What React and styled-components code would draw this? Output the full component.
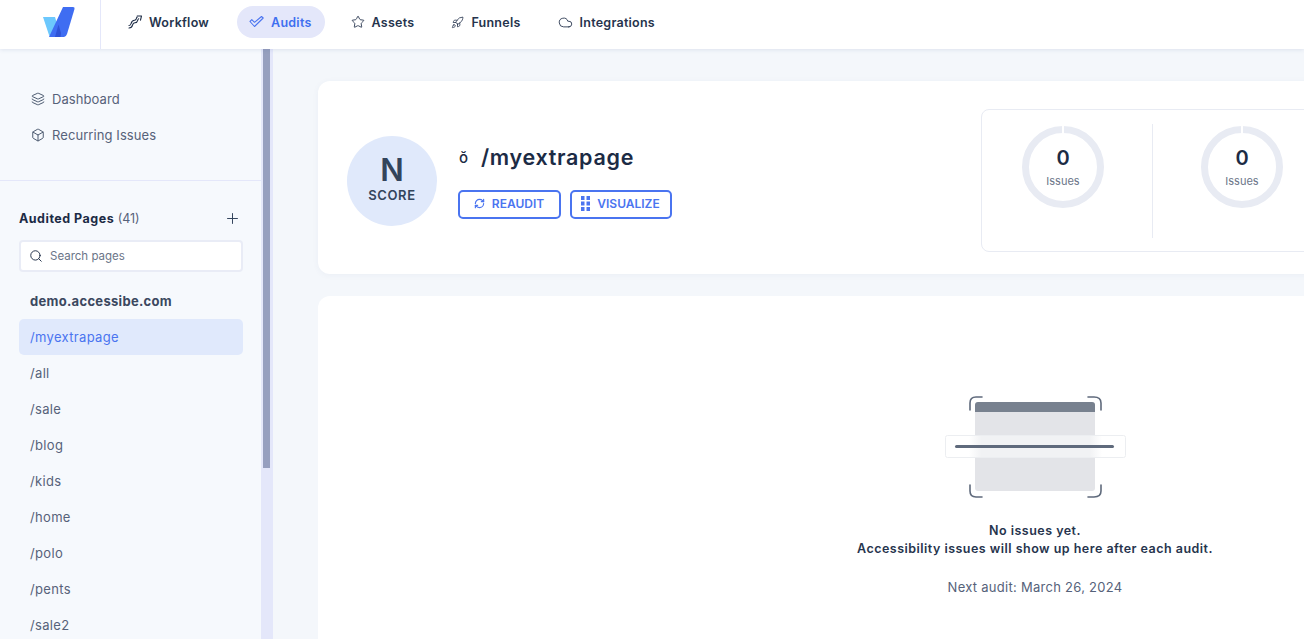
import React from 'react';
import styled, { createGlobalStyle } from 'styled-components';
import { Star, Rocket, Cloud, Layers, Box, Search, Plus, RefreshCw } from 'lucide-react';

const Global = createGlobalStyle`
    html, body { margin: 0; height: 100%; overflow: hidden; }
    body { font-family: Inter, "Noto Sans", sans-serif; color: #1c2b45; background: #f4f7fb; }
    #root { height: 100%; }
    * { box-sizing: border-box; }
`;

const Page = styled.div`
    height: 639px;
    width: 1304px;
    overflow: hidden;
    display: flex;
    flex-direction: column;
`;

const TopBar = styled.header`
    height: 49px;
    flex: none;
    display: flex;
    background: #fff;
    box-shadow: 0 1px 4px rgba(60, 80, 140, .12);
    position: relative;
    z-index: 2;
`;

const LogoCell = styled.div`
    width: 101px;
    flex: none;
    border-right: 1px solid #e4e7fa;
    padding: 7px 0 0 43px;
`;

const Nav = styled.nav`
    display: flex;
    align-items: flex-start;
    padding: 6px 0 0 13px;
`;

const NavItem = styled.a`
    height: 32px;
    display: flex;
    align-items: center;
    gap: 7px;
    padding: 0 ${p => (p.$active ? 13 : 14)}px 0 ${p => (p.$active ? 12 : 14)}px;
    margin-right: ${p => p.$gap}px;
    border-radius: 16px;
    font-size: 12.5px;
    font-weight: 600;
    letter-spacing: .25px;
    color: ${p => (p.$active ? '#3f6ff0' : '#26344d')};
    background: ${p => (p.$active ? '#e4e7fa' : 'transparent')};
`;

const Body = styled.div`
    flex: 1;
    display: flex;
    min-height: 0;
`;

const Sidebar = styled.aside`
    width: 261px;
    flex: none;
    background: #f6f9fd;
    overflow: hidden;
`;

const ScrollTrack = styled.div`
    width: 12px;
    flex: none;
    background: #e4e7fa;
    padding-left: 2px;
`;

const ScrollThumb = styled.div`
    width: 7px;
    height: 419px;
    background: #969fbf;
`;

const TopLinks = styled.div`
    height: 132px;
    padding: 32px 0 0 31px;
    border-bottom: 1px solid #e4e7fa;
`;

const TopLink = styled.div`
    height: 36px;
    display: flex;
    align-items: center;
    gap: 7px;
    font-size: 13px;
    letter-spacing: .08px;
    color: #56627a;
    svg { color: #33445c; }
`;

const PagesHead = styled.div`
    display: flex;
    align-items: center;
    justify-content: space-between;
    padding: 28px 20px 0 19px;
    height: 47px;
    font-size: 12.5px;
    font-weight: 700;
    letter-spacing: .5px;
    color: #1c2b45;
    span { font-weight: 400; letter-spacing: 0; color: #56627a; }
`;

const SearchBox = styled.div`
    margin: 12px 18px 0 19px;
    height: 32px;
    display: flex;
    align-items: center;
    gap: 7px;
    padding: 0 8px;
    background: #fff;
    border: 2px solid #e9ecf6;
    border-radius: 4px;
    font-size: 11.5px;
    color: #6b7588;
`;

const Domain = styled.div`
    height: 33px;
    margin-top: 14px;
    padding: 0 0 3px 30px;
    display: flex;
    align-items: center;
    font-size: 13px;
    font-weight: 700;
    letter-spacing: .3px;
    color: #3b4860;
`;

const PageRow = styled.div`
    height: 36px;
    margin: 0 18px 0 19px;
    padding-left: 11px;
    display: flex;
    align-items: center;
    border-radius: 5px;
    font-size: 13px;
    letter-spacing: .33px;
    color: ${p => (p.$active ? '#4a74f0' : '#56627a')};
    background: ${p => (p.$active ? '#e0e9fc' : 'transparent')};
`;

const Main = styled.main`
    flex: 1;
    padding: 32px 0 0 45px;
    overflow: hidden;
`;

const Card = styled.section`
    width: 1434px;
    background: #fff;
    border-radius: 12px;
`;

const ScoreCard = styled(Card)`
    height: 193px;
    display: flex;
    align-items: flex-start;
    padding: 28px 0 0 29px;
    margin-bottom: 22px;
    box-shadow: 0 1px 6px rgba(60, 80, 140, .05);
`;

const ScoreCircle = styled.div`
    width: 90px;
    height: 90px;
    margin-top: 27px;
    padding-bottom: 6px;
    flex: none;
    border-radius: 50%;
    background: #e0e9fb;
    display: flex;
    flex-direction: column;
    align-items: center;
    justify-content: center;
    color: #33445c;
`;

const ScoreLetter = styled.div`
    font-size: 31px;
    font-weight: 600;
    line-height: 34px;
`;

const ScoreLabel = styled.div`
    font-size: 13px;
    font-weight: 600;
    letter-spacing: .6px;
    line-height: 16px;
`;

const PageInfo = styled.div`
    width: 544px;
    flex: none;
    padding: 32px 0 0 21px;
`;

const Title = styled.h1`
    margin: 0;
    height: 32px;
    display: flex;
    align-items: center;
    gap: 11px;
    font-size: 21.5px;
    font-weight: 600;
    letter-spacing: .7px;
    color: #1c2b45;
    i { font-style: normal; font-size: 15px; font-weight: 500; width: 12px; padding-left: 1px; }
`;

const Actions = styled.div`
    display: flex;
    gap: 9px;
    margin-top: 17px;
`;

const OutlineButton = styled.button`
    height: 29px;
    width: ${p => p.$w}px;
    display: flex;
    align-items: center;
    justify-content: center;
    gap: 7px;
    padding: 0 1px 2px 0;
    background: #fff;
    border: 2px solid #4a74f0;
    border-radius: 5px;
    font: 600 12px Inter, sans-serif;
    color: #4a74f0;
`;

const StatsBox = styled.div`
    width: 500px;
    height: 143px;
    flex: none;
    display: flex;
    padding: 14px 0;
    border: 1px solid #e8ebf3;
    border-radius: 8px;
`;

const Stat = styled.div`
    width: ${p => p.$w}px;
    flex: none;
    height: 114px;
    padding: 2px 0 0 ${p => p.$pad}px;
    border-right: ${p => (p.$line ? '1px solid #e8ebf3' : 'none')};
`;

const Ring = styled.div`
    width: 82px;
    height: 82px;
    position: relative;
`;

const RingText = styled.div`
    position: absolute;
    inset: 0;
    display: flex;
    flex-direction: column;
    align-items: center;
    justify-content: center;
    b { font-size: 20px; font-weight: 600; line-height: 24px; color: #1c2b45; }
    span { margin-top: 3px; font-size: 11px; line-height: 16px; color: #6b7588; }
`;

const EmptyCard = styled(Card)`
    height: 400px;
    padding-top: 99px;
    display: flex;
    flex-direction: column;
    align-items: center;
`;

const EmptyText = styled.p`
    margin: 23px 0 0;
    text-align: center;
    font-size: 12.5px;
    font-weight: 600;
    letter-spacing: .48px;
    line-height: 18px;
    color: #26344d;
`;

const NextAudit = styled.p`
    margin: 20px 0 0;
    font-size: 13px;
    letter-spacing: .27px;
    line-height: 18px;
    color: #56627a;
`;

const Logo = () => (
    <svg width="32" height="30" viewBox="0 0 32 30">
        <path d="M0 10h12l6 20H9q-2 0-3-2z" fill="#6cc8fd" />
        <path d="M20 0h10q2 0 1.500 2L24 27q-1 3-3 3h-9l-6-0z" fill="#3f6df2" />
        <path d="M15.500 17.500L18 26l-.5 4H12z" fill="#2f53d6" />
    </svg>
);

const WorkflowIcon = () => (
    <svg width="14" height="14" viewBox="0 0 14 14" fill="none" stroke="#1c2b45" strokeWidth="1.100" strokeLinecap="round" strokeLinejoin="round">
        <path d="M1 13c2 0 3-.8 3.500-2.800.4-1.700 1-2.500 2.500-2.500s2.300-.8 2.700-2.400c.2-.8.500-1.300 1-1.500" />
        <path d="M1 10.500c1.300 0 1.800-.6 2.100-2 .5-2 1.500-3.300 3.500-3.300 1 0 1.500-.5 1.700-1.500.1-.7.4-1.300.9-1.700" />
        <path d="M9.200 1h4.300l-1 4.200" />
    </svg>
);

const CheckIcon = () => (
    <svg width="15" height="14" viewBox="0 0 15 14" fill="none" stroke="#4a74f0" strokeWidth="1.100" strokeLinejoin="round">
        <path d="M1 6.500l1.800-1.800 2.700 2.600L12.500 1.500l1.700 1.500-8.700 8.500z" />
    </svg>
);

const GridIcon = () => (
    <svg width="9" height="15" viewBox="0 0 9 15" fill="#4a74f0">
        <rect width="3.500" height="4" /><rect x="5.500" width="3.500" height="4" />
        <rect y="5.500" width="3.500" height="4" /><rect x="5.500" y="5.500" width="3.500" height="4" />
        <rect y="11" width="3.500" height="4" /><rect x="5.500" y="11" width="3.500" height="4" />
    </svg>
);

const Donut = () => (
    <svg width="82" height="82" viewBox="0 0 82 82" fill="none">
        <circle cx="41" cy="41" r="37.500" stroke="#e8ebf3" strokeWidth="7" />
        <rect x="40" y="0" width="2" height="8" fill="#fff" />
    </svg>
);

const Illustration = () => (
    <svg width="182" height="104" viewBox="-1 0 182 104" fill="none">
        <defs>
            <linearGradient id="strip" x1="0" x2="1" y1="0" y2="0">
                <stop offset="0" stopColor="#fff" />
                <stop offset=".13" stopColor="#fff" />
                <stop offset=".2" stopColor="#f1f2f4" />
                <stop offset=".8" stopColor="#f1f2f4" />
                <stop offset=".87" stopColor="#fff" />
                <stop offset="1" stopColor="#fff" />
            </linearGradient>
        </defs>
        <path d="M30 14q0-7 3-7h114q3 0 3 3v83q0 3-3 3H33q-3 0-3-3z" fill="#e3e4e8" />
        <path d="M30 17V10q0-3 3-3h114q3 0 3 3v7z" fill="#78818f" />
        <rect x=".5" y="40.500" width="180" height="22" rx="2" fill="url(#strip)" stroke="#eceef1" />
        <rect x="10" y="50" width="159" height="3" rx="1.500" fill="#5f6a7c" />
        <g stroke="#5f6a7c" strokeWidth="1.600" strokeLinecap="round">
            <path d="M25 15V8q0-6 6-6h6" />
            <path d="M143 2h6q7 0 7 6v7" />
            <path d="M25 90v6q0 6 6 6h6" />
            <path d="M143 102h6q7 0 7-6v-6" />
        </g>
    </svg>
);

const pages = ['/all', '/sale', '/blog', '/kids', '/home', '/polo', '/pents', '/sale2'];

export default function App() {
    return (
        <Page>
            <Global />
            <TopBar>
                <LogoCell><Logo /></LogoCell>
                <Nav>
                    <NavItem $gap={14}><WorkflowIcon />Workflow</NavItem>
                    <NavItem $active $gap={12}><CheckIcon />Audits</NavItem>
                    <NavItem $gap={9}><Star size={14} strokeWidth={1.5} />Assets</NavItem>
                    <NavItem $gap={9}><Rocket size={13} strokeWidth={1.5} />Funnels</NavItem>
                    <NavItem><Cloud size={15} strokeWidth={1.4} />Integrations</NavItem>
                </Nav>
            </TopBar>
            <Body>
                <Sidebar>
                    <TopLinks>
                        <TopLink><Layers size={14} strokeWidth={1.5} />Dashboard</TopLink>
                        <TopLink><Box size={14} strokeWidth={1.5} />Recurring Issues</TopLink>
                    </TopLinks>
                    <PagesHead>
                        <div>Audited Pages <span>(41)</span></div>
                        <Plus size={17} strokeWidth={1.4} color="#33445c" />
                    </PagesHead>
                    <SearchBox><Search size={14} strokeWidth={1.6} color="#1c2b45" />Search pages</SearchBox>
                    <Domain>demo.accessibe.com</Domain>
                    <PageRow $active>/myextrapage</PageRow>
                    {pages.map(p => <PageRow key={p}>{p}</PageRow>)}
                </Sidebar>
                <ScrollTrack><ScrollThumb /></ScrollTrack>
                <Main>
                    <ScoreCard>
                        <ScoreCircle>
                            <ScoreLetter>N</ScoreLetter>
                            <ScoreLabel>SCORE</ScoreLabel>
                        </ScoreCircle>
                        <PageInfo>
                            <Title><i>ŏ</i>/myextrapage</Title>
                            <Actions>
                                <OutlineButton $w={103}><RefreshCw size={11} strokeWidth={2.6} />REAUDIT</OutlineButton>
                                <OutlineButton $w={102}><GridIcon />VISUALIZE</OutlineButton>
                            </Actions>
                        </PageInfo>
                        <StatsBox>
                            <Stat $w={171} $pad={40} $line><Ring><Donut /><RingText><b>0</b><span>Issues</span></RingText></Ring></Stat>
                            <Stat $w={171} $pad={48}><Ring><Donut /><RingText><b>0</b><span>Issues</span></RingText></Ring></Stat>
                        </StatsBox>
                    </ScoreCard>
                    <EmptyCard>
                        <Illustration />
                        <EmptyText>No issues yet.<br />Accessibility issues will show up here after each audit.</EmptyText>
                        <NextAudit>Next audit: March 26, 2024</NextAudit>
                    </EmptyCard>
                </Main>
            </Body>
        </Page>
    );
}
